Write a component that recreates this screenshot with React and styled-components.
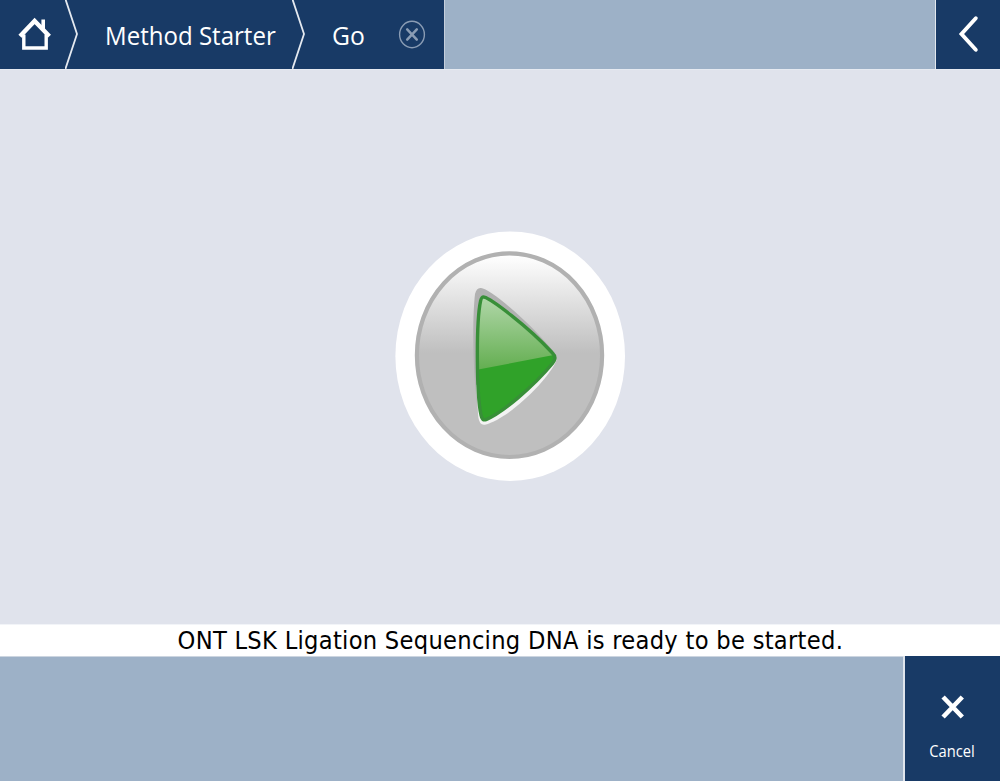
import React from 'react';
import styled, { createGlobalStyle } from 'styled-components';

const GlobalStyle = createGlobalStyle`
  * {
    box-sizing: border-box;
  }
  body {
    margin: 0;
    overflow: hidden;
    background-color: #e0e3ec;
    font-family: 'Open Sans', 'Noto Sans', sans-serif;
  }
  svg {
    display: block;
  }
`

const Screen = styled.div`
  display: flex;
  flex-direction: column;
  width: 1000px;
  height: 781px;
  background-color: #e0e3ec;
`

const Header = styled.header`
  display: flex;
  flex: none;
  height: 70px;
  background-color: #9db1c7;
  border-bottom: 1px solid #e6eaf1;
`

const Breadcrumb = styled.nav`
  display: flex;
  align-items: center;
  width: 445px;
  color: #fff;
  background-color: #183a66;
  border-right: 1px solid #c5cfdc;
`

const Crumb = styled.div`
  display: flex;
  align-items: center;
  flex: none;
  width: ${props => props.$width}px;
  height: 69px;
  padding-left: ${props => props.$indent}px;
`

const Label = styled.span`
  display: inline-block;
  flex: none;
  font-size: ${props => props.$size || 26}px;
  line-height: 36px;
  white-space: nowrap;
  transform: scaleX(${props => props.$stretch || 1});
  transform-origin: ${props => props.$origin || 'left'} center;
`

const CrumbText = styled.div`
  display: flex;
  padding-top: 1px;
`

const CloseButton = styled.button`
  margin: 0;
  padding: 0;
  border: 0;
  background: none;
`

const BackButton = styled.button`
  width: 65px;
  height: 69px;
  margin: 0 0 0 auto;
  padding: 0;
  border: 0;
  border-left: 1px solid #e2e8ef;
  background-color: #183a66;
`

const Stage = styled.main`
  display: flex;
  flex: none;
  align-items: center;
  justify-content: center;
  height: 554px;
  padding: 18px 0 0 20px;
`

const PlayButton = styled.button`
  margin: 0;
  padding: 0;
  border: 0;
  background: none;
`

const Status = styled.div`
  display: flex;
  flex: none;
  justify-content: center;
  height: 32px;
  padding-left: 20px;
  border-top: 1px solid #f2f4f8;
  color: #000;
  background-color: #fff;
  font-family: 'DejaVu Sans', sans-serif;
`

const StatusText = styled.div`
  height: 31px;
  margin-top: -3px;
  letter-spacing: 0.3px;
`

const Footer = styled.footer`
  display: flex;
  flex: 1;
  justify-content: flex-end;
  border-top: 1px solid #ccd5e0;
  background-color: #9db1c7;
`

const CancelButton = styled.button`
  display: flex;
  flex-direction: column;
  align-items: center;
  width: 97px;
  margin: -1px 0 0;
  padding: 38px 0 0;
  border: 0;
  border-left: 2px solid #dfe5ed;
  color: #fff;
  background-color: #183a66;
  font-family: inherit;
`

const CancelText = styled.div`
  margin-top: 13px;
  padding-right: 1px;
`

const HomeIcon = () => (
  <svg width="36" height="36" viewBox="0 0 36 36" fill="none" stroke="#fff">
    <path d="M6.8 17.5V31H29.2V17.5" strokeWidth="3.4" />
    <path d="M3 19.2L17.6 4L32.4 19.2" strokeWidth="4.4" />
    <path d="M26.2 2.5V13" strokeWidth="3.6" />
  </svg>
)

const Chevron = () => (
  <svg width="14" height="69" viewBox="0 0 14 69" fill="none">
    <path d="M0.4 -1L12 34L0.4 69" stroke="#e4e9f0" strokeWidth="1.8" />
  </svg>
)

const CloseIcon = () => (
  <svg width="28" height="30" viewBox="0 0 28 30" fill="none" stroke="#8a9cb4">
    <ellipse cx="14" cy="14.5" rx="12.4" ry="13.2" strokeWidth="1.4" />
    <path d="M9.2 9.3L18.8 19.7M18.8 9.3L9.2 19.7" strokeWidth="2.5" strokeLinecap="round" />
  </svg>
)

const BackIcon = () => (
  <svg width="64" height="69" viewBox="936 0 64 69" fill="none">
    <path d="M975.8 18.3L961.5 34L975.8 49.8" stroke="#fff" strokeWidth="3.9" strokeLinecap="round" />
  </svg>
)

const CancelIcon = () => (
  <svg width="26" height="26" viewBox="0 0 26 26">
    <path d="M3.1 3L22.3 23M22.3 3L3.1 23" stroke="#fff" strokeWidth="4.6" />
  </svg>
)

const arrow = 'M484.3 297.2C491 299 527 325.5 552 352.5Q557.5 357.7 552.5 363.5C533 387 502 413 486 419.6Q482 421 481 415C476.4 394 476 322 480.6 300.8Q481.6 296.3 484.3 297.2Z'

const PlayIcon = () => (
  <svg width="230" height="250" viewBox="395 231 230 250">
    <defs>
      <linearGradient id="metal" gradientUnits="userSpaceOnUse" x1="0" y1="255" x2="0" y2="353">
        <stop offset="0" stopColor="#fff" />
        <stop offset="1" stopColor="#bfbfbf" />
      </linearGradient>
      <linearGradient id="gloss" gradientUnits="userSpaceOnUse" x1="0" y1="297" x2="0" y2="370">
        <stop offset="0" stopColor="#b1d7a9" />
        <stop offset="1" stopColor="#63ae50" />
      </linearGradient>
      <clipPath id="arrowClip">
        <path d={arrow} />
      </clipPath>
    </defs>
    <ellipse cx="510.2" cy="356.2" rx="114.8" ry="124.8" fill="#fff" />
    <ellipse cx="509.5" cy="355.2" rx="92.6" ry="101.8" fill="url(#metal)" stroke="#b1b1b1" strokeWidth="4.2" />
    {/* shade above the arrow, highlight below it */}
    <path d="M481 288C490 289 527 319 555 353L540 362L478 410C473 380 472 320 475 294Q476.5 287.5 481 288Z" fill="#b1b1b1" />
    <path d="M556.5 360C550 378 509 419 485 424.7Q479.5 425.8 478.3 417L476 385L540 350Z" fill="#f3f3f3" />
    <path d={arrow} fill="#30a229" />
    <path d="M470 290H560V353.7L470 371.2Z" fill="url(#gloss)" clipPath="url(#arrowClip)" />
    <path d={arrow} fill="none" stroke="#388f38" strokeWidth="3.4" />
  </svg>
)

const App = () => {
  return (
    <Screen>
      <GlobalStyle />
      <Header>
        <Breadcrumb>
          <Crumb $width={65} $indent={17}>
            <HomeIcon />
          </Crumb>
          <Chevron />
          <Crumb $width={213} $indent={26}>
            <CrumbText>
              <Label $stretch={0.925}>Method Starter</Label>
            </CrumbText>
          </Crumb>
          <Chevron />
          <Crumb $width={92} $indent={26}>
            <CrumbText>
              <Label $stretch={0.95}>Go</Label>
            </CrumbText>
          </Crumb>
          <CloseButton aria-label="Close">
            <CloseIcon />
          </CloseButton>
        </Breadcrumb>
        <BackButton aria-label="Back">
          <BackIcon />
        </BackButton>
      </Header>
      <Stage>
        <PlayButton aria-label="Start">
          <PlayIcon />
        </PlayButton>
      </Stage>
      <Status>
        <StatusText>
          <Label $size={25.5} $stretch={0.889} $origin="center">
            ONT LSK Ligation Sequencing DNA is ready to be started.
          </Label>
        </StatusText>
      </Status>
      <Footer>
        <CancelButton>
          <CancelIcon />
          <CancelText>
            <Label $size={15.5} $stretch={0.95} $origin="center">Cancel</Label>
          </CancelText>
        </CancelButton>
      </Footer>
    </Screen>
  );
};

export default App;
